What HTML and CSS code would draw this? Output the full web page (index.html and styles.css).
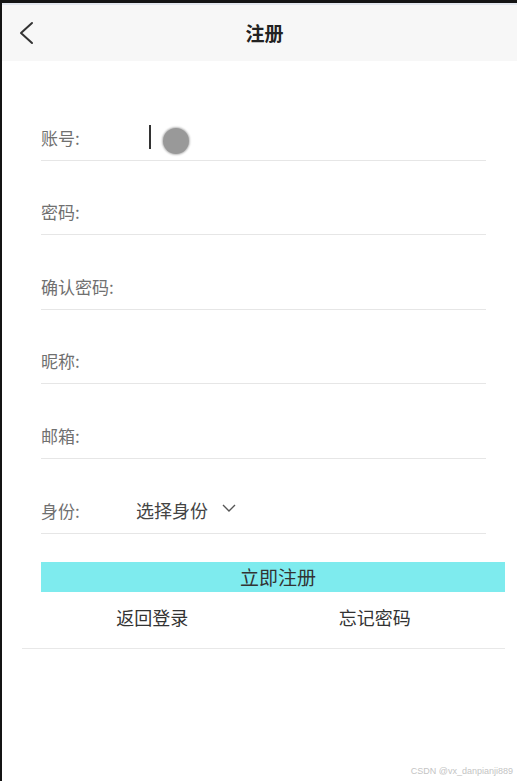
FILE: index.html
```html
<!DOCTYPE html>
<html>
<head>
  <meta charset="utf-8">
  <title>注册</title>
  <link rel="stylesheet" href="styles.css">
</head>
<body>
  <div class="frame">
    <div class="topline"></div>
    <div class="header">
      <svg class="back" width="16" height="24" viewBox="0 0 16 24">
        <path d="M13 2 L2 12 L13 22" fill="none" stroke="#333" stroke-width="2" stroke-linecap="round" stroke-linejoin="round"/>
      </svg>
      <span class="title">注册</span>
    </div>

    <div class="form">
      <div class="row">
        <label>账号:</label>
        <span class="cursor"></span>
        <span class="dot"></span>
      </div>
      <div class="row"><label>密码:</label></div>
      <div class="row"><label>确认密码:</label></div>
      <div class="row"><label>昵称:</label></div>
      <div class="row"><label>邮箱:</label></div>
      <div class="row">
        <label>身份:</label>
        <span class="select">选择身份</span>
        <svg class="arrow" width="14" height="9" viewBox="0 0 14 9">
          <path d="M1 1 L7 7 L13 1" fill="none" stroke="#555" stroke-width="1.4"/>
        </svg>
      </div>
    </div>

    <button class="submit">立即注册</button>

    <div class="links">
      <span>返回登录</span>
      <span>忘记密码</span>
    </div>
    <div class="bottomline"></div>

    <div class="mark">CSDN @vx_danpianji889</div>
  </div>
</body>
</html>
```

FILE: styles.css
```css
body {
  margin: 0;
  font-family: "Noto Sans CJK SC", "Liberation Sans", sans-serif;
  background-color: #fff;
}

.frame {
  position: relative;
  height: 778px;
  border-left: 2px solid #141414;
  border-top: 3px solid #141414;
  background-color: #fff;
}

.topline {
  height: 2px;
  background-color: #e2e6ee;
}

.header {
  position: relative;
  height: 56px;
  background-color: #f7f7f7;
  display: flex;
  align-items: center;
  justify-content: center;
}

.back {
  position: absolute;
  left: 17px;
  top: 16px;
}

.title {
  font-size: 19px;
  font-weight: bold;
  color: #222;
  margin: -2px 0 0 10px;
}

.form {
  padding: 25px 0 0 39px;
  width: 445px;
}

.row {
  display: flex;
  align-items: flex-end;
  height: 74.6px;
  box-sizing: border-box;
  padding-bottom: 12px;
  border-bottom: 1px solid #e6e6e6;
}

.row label {
  width: 95px;
  font-size: 17px;
  line-height: 20px;
  color: #707070;
}

.cursor {
  width: 1.5px;
  height: 24px;
  margin: 0 0 -1px 13px;
  background-color: #333;
}

.dot {
  width: 26px;
  height: 26px;
  margin: 0 0 -6px 12px;
  border-radius: 50%;
  background-color: #999;
  box-shadow: 0 0 2px 1px #bbb;
}

.select {
  font-size: 18px;
  line-height: 22px;
  color: #444;
}

.arrow {
  margin: 0 0 8px 14px;
}

.submit {
  display: block;
  margin: 28px 0 0 39px;
  width: 464px;
  height: 30px;
  padding: 0 0 0 10px;
  border: none;
  background-color: #7eebee;
  font-family: "Noto Sans CJK SC", "Liberation Sans", sans-serif;
  font-size: 19px;
  line-height: 30px;
  color: #333;
  text-align: center;
}

.links {
  display: flex;
  margin-left: 39px;
  width: 445px;
  padding-top: 13px;
}

.links span {
  flex: 1;
  text-align: center;
  font-size: 18px;
  line-height: 24px;
  color: #333;
}

.bottomline {
  margin: 19px 0 0 20px;
  width: 483px;
  height: 1px;
  background-color: #e8e8e8;
}

.mark {
  position: absolute;
  right: 4px;
  bottom: 5px;
  font-family: "Liberation Sans", sans-serif;
  font-size: 9px;
  color: #c4c4c4;
}
```
